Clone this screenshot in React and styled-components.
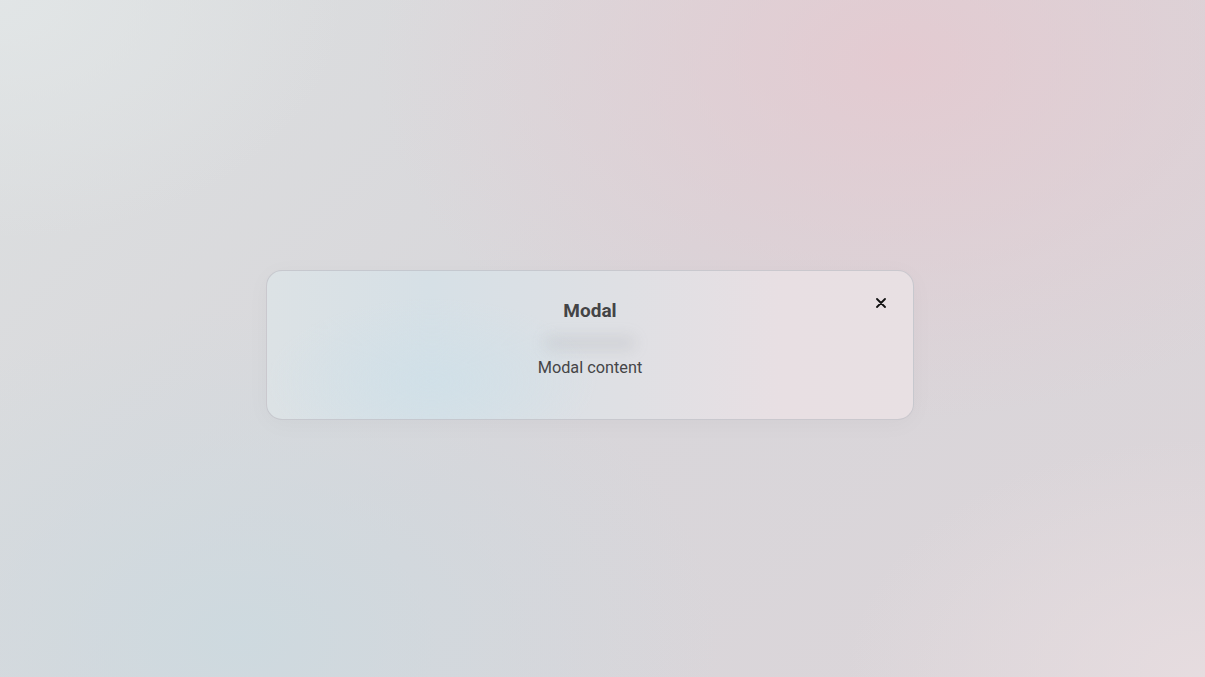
import styled, { createGlobalStyle } from 'styled-components';

const GlobalStyle = createGlobalStyle`
  html, body {
    margin: 0;
    padding: 0;
    height: 100%;
  }
  body {
    font-family: Roboto, "Liberation Sans", sans-serif;
  }
  #root {
    height: 100%;
  }
`;

const Backdrop = styled.div`
  width: 100%;
  height: 100vh;
  box-sizing: border-box;
  padding: 13px 25px 0 0;
  display: flex;
  align-items: center;
  justify-content: center;
  overflow: hidden;
  background:
    radial-gradient(ellipse 700px 480px at 900px 60px, rgba(230, 200, 207, 0.8), transparent 75%),
    radial-gradient(ellipse 640px 440px at 240px 640px, rgba(204, 218, 224, 0.85), transparent 75%),
    radial-gradient(ellipse 460px 320px at 0px 0px, rgba(226, 230, 231, 0.9), transparent 75%),
    radial-gradient(ellipse 480px 320px at 1205px 677px, rgba(231, 221, 224, 0.9), transparent 75%),
    linear-gradient(135deg, #dcdfe0 0%, #d8d6da 50%, #dcd5d9 100%);
`;

const Modal = styled.div`
  position: relative;
  width: 648px;
  box-sizing: border-box;
  padding: 27px 32px 39px;
  border-radius: 16px;
  border: 1px solid rgba(190, 190, 196, 0.7);
  display: flex;
  flex-direction: column;
  align-items: center;
  background:
    radial-gradient(ellipse 220px 110px at 165px 110px, rgba(208, 224, 232, 0.9), transparent 75%),
    linear-gradient(90deg, #dce2e5 0%, #d6e0e6 25%, #dfe0e4 55%, #e8dfe3 80%, #e8e0e3 100%);
  box-shadow: 0 4px 24px rgba(0, 0, 0, 0.03);
`;

const Title = styled.h2`
  margin: 0;
  font-size: 19px;
  line-height: 25px;
  font-weight: 700;
  color: #444446;
`;

const Haze = styled.div`
  width: 92px;
  height: 16px;
  margin: 12px 0 5px;
  border-radius: 10px;
  background: rgba(120, 125, 128, 0.12);
  filter: blur(7px);
`;

const Content = styled.p`
  margin: 0;
  font-size: 16.3px;
  line-height: 24px;
  color: #454547;
`;

const CloseButton = styled.button`
  position: absolute;
  top: 23px;
  right: 23px;
  width: 18px;
  height: 18px;
  padding: 0;
  border: none;
  background: transparent;
  display: flex;
  align-items: center;
  justify-content: center;
  cursor: pointer;
`;

export default function App() {
  return (
    <>
      <GlobalStyle />
      <Backdrop>
        <Modal>
          <CloseButton aria-label="Close">
            <svg width="10" height="10" viewBox="0 0 10 10">
              <path d="M1 1L9 9M9 1L1 9" stroke="#111" strokeWidth="1.8" strokeLinecap="round" />
            </svg>
          </CloseButton>
          <Title>Modal</Title>
          <Haze />
          <Content>Modal content</Content>
        </Modal>
      </Backdrop>
    </>
  );
}
